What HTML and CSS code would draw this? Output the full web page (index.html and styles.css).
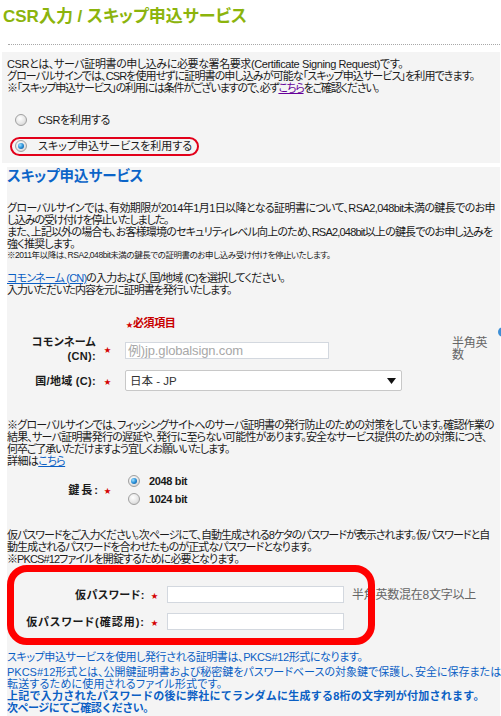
FILE: index.html
```html
<!DOCTYPE html>
<html lang="ja">
<head>
<meta charset="utf-8">
<title>CSR入力 / スキップ申込サービス</title>
<link rel="stylesheet" href="styles.css">
</head>
<body>
<h1 class="title">CSR入力 / スキップ申込サービス</h1>
<div class="rule"></div>

<div class="intro">
  <p class="text nowrap"><span class="ls-m04">CSRとは、サーバ証明書の申し込みに必要な署名要求(Certificate Signing Request)です。</span><br><span class="ls-m09">グローバルサインでは、CSRを使用せずに証明書の申し込みが可能な「スキップ申込サービス」を利用できます。</span><br><span class="ls-m12">※「スキップ申込サービス」の利用には条件がございますので、必ず<a class="visited" href="#">こちら</a>をご確認ください。</span></p>
  <div class="choice choice-first"><span class="radio"></span><span class="choice-label ls-m04">CSRを利用する</span></div>
  <div class="choice choice-second"><span class="radio checked"></span><span class="choice-label">スキップ申込サービスを利用する</span><span class="mark-ellipse"></span></div>
</div>

<div class="section">
  <h2 class="heading">スキップ申込サービス</h2>
  <p class="text nowrap para1"><span class="ls-m06">グローバルサインでは、有効期限が2014年1月1日以降となる証明書について、RSA2,048bit未満の鍵長でのお申</span><br><span class="ls-m12">し込みの受け付けを停止いたしました。</span><br><span class="ls-m08">また、上記以外の場合も、お客様環境のセキュリティレベル向上のため、RSA2,048bit以上の鍵長でのお申し込みを</span><br><span class="ls-m08">強く推奨します。</span></p>
  <p class="small nowrap">※2011年以降は、RSA2,048bit未満の鍵長での証明書のお申し込み受け付けを停止いたします。</p>
  <p class="text nowrap para-cn"><span class="ls-m08"><a class="link" href="#">コモンネーム (CN)</a>の入力および、国/地域 (C)を選択してください。</span><br><span class="ls-m10">入力いただいた内容を元に証明書を発行いたします。</span></p>

  <div class="required"><span class="star">★</span>必須項目</div>

  <div class="row row-cn">
    <div class="label">コモンネーム<br>(CN):</div>
    <div class="star-col"><span class="star">★</span></div>
    <div class="input cn-input">例)jp.globalsign.com</div>
    <div class="hint hint-cn">半角英<br>数</div>
  </div>
  <div class="row row-country">
    <div class="label">国/地域 (C):</div>
    <div class="star-col"><span class="star">★</span></div>
    <div class="select"><span>日本 - JP</span><svg class="arrow" width="9" height="6" viewBox="0 0 9 6"><path d="M0 0H9L4.5 6Z" fill="#111"/></svg></div>
  </div>

  <p class="text nowrap para-phish"><span class="ls-m08">※グローバルサインでは、フィッシングサイトへのサーバ証明書の発行防止のための対策をしています。確認作業の</span><br><span class="ls-m08">結果、サーバ証明書発行の遅延や、発行に至らない可能性があります。安全なサービス提供のための対策につき、</span><br><span class="ls-m11">何卒ご了承いただけますよう宜しくお願いいたします。</span><br><span class="ls-m06">詳細は<a class="link" href="#">こちら</a></span></p>

  <div class="row row-key">
    <div class="label label-key">鍵長:</div>
    <div class="star-col"><span class="star">★</span></div>
    <div class="key-options">
      <div class="key-opt"><span class="radio checked"></span><span class="key-text">2048 bit</span></div>
      <div class="key-opt"><span class="radio"></span><span class="key-text">1024 bit</span></div>
    </div>
  </div>

  <p class="text nowrap para-pw"><span class="ls-m10">仮パスワードをご入力ください。次ページにて、自動生成される8ケタのパスワードが表示されます。仮パスワードと自</span><br><span class="ls-m09">動生成されるパスワードを合わせたものが正式なパスワードとなります。</span><br><span class="ls-m09">※PKCS#12ファイルを開錠するために必要となります。</span></p>

  <div class="pw-block">
    <div class="row pw-row">
      <div class="label pw-label">仮パスワード:</div>
      <div class="star-col pw-star"><span class="star">★</span></div>
      <div class="input pw-input"></div>
      <div class="hint hint-pw">半角英数混在8文字以上</div>
    </div>
    <div class="row pw-row pw-row2">
      <div class="label pw-label pw-label-wide">仮パスワード(確認用):</div>
      <div class="star-col pw-star"><span class="star">★</span></div>
      <div class="input pw-input"></div>
    </div>
    <div class="mark-box"></div>
  </div>

  <p class="blue nowrap blue1"><span class="ls-m04">スキップ申込サービスを使用し発行される証明書は、PKCS#12形式になります。</span></p>
  <p class="blue nowrap blue2"><span class="ls-0">PKCS#12形式とは、公開鍵証明書および秘密鍵をパスワードベースの対象鍵で保護し、安全に保存または</span><br><span class="ls-p02">転送するために使用されるファイル形式です。</span></p>
  <p class="blue bold nowrap"><span class="ls-p025">上記で入力されたパスワードの後に弊社にてランダムに生成する8桁の文字列が付加されます。</span><br><span class="ls-m05">次ページにてご確認ください。</span></p>
  <span class="help-dot"></span>
</div>
</body>
</html>
```

FILE: styles.css
```css
html, body {
  margin: 0;
  padding: 0;
  background: #fff;
}
body {
  width: 501px;
  height: 716px;
  overflow: hidden;
  font-family: "Liberation Sans", "Noto Sans CJK JP", sans-serif;
  font-feature-settings: "palt";
  font-size: 11px;
  line-height: 12px;
  letter-spacing: -0.8px;
  color: #1a1a1a;
}
p { margin: 0; }
.nowrap { white-space: nowrap; }

/* per-line tracking, tuned to the original line lengths */
.ls-p025 { letter-spacing: 0.25px; }
.ls-p02 { letter-spacing: 0.2px; }
.ls-0 { letter-spacing: 0; }
.ls-m04 { letter-spacing: -0.4px; }
.ls-m05 { letter-spacing: -0.5px; }
.ls-m06 { letter-spacing: -0.6px; }
.ls-m08 { letter-spacing: -0.8px; }
.ls-m09 { letter-spacing: -0.9px; }
.ls-m10 { letter-spacing: -1px; }
.ls-m11 { letter-spacing: -1.1px; }
.ls-m12 { letter-spacing: -1.2px; }

.title {
  margin: 0;
  padding: 7px 0 0 3px;
  font-size: 17px;
  line-height: 20px;
  font-weight: bold;
  letter-spacing: 0;
  color: #8cb40c;
}
.rule {
  margin: 17px 1px 0 8px;
  border-top: 1px dotted #a8a8a8;
}

.intro {
  margin: 7px 1px 0 2px;
  padding: 6px 5px 9px 5px;
  background: #f4f4f4;
}
.visited { color: #660099; }
.link { color: #0b5fc4; }

.choice {
  position: relative;
  display: flex;
  align-items: center;
  height: 16px;
  padding-left: 8px;
}
.choice-first { margin-top: 18px; }
.choice-second { margin-top: 10px; }
.choice-label {
  margin-left: 11px;
  font-size: 11px;
  letter-spacing: 0;
}
.choice-label.ls-m04 { letter-spacing: -0.4px; }
.mark-ellipse {
  position: absolute;
  left: 3px;
  top: -1px;
  width: 189px;
  height: 19px;
  box-sizing: border-box;
  border: 2px solid #e2001a;
  border-radius: 10px;
}

.radio {
  display: inline-block;
  width: 12px;
  height: 12px;
  box-sizing: border-box;
  border-radius: 50%;
  border: 1px solid #a0a0a0;
  background: radial-gradient(circle at 40% 35%, #ffffff 0%, #e6e6e6 55%, #c8c8c8 100%);
  position: relative;
  flex: none;
}
.radio.checked::after {
  content: "";
  position: absolute;
  left: 2px;
  top: 2px;
  width: 6px;
  height: 6px;
  border-radius: 50%;
  background: radial-gradient(circle at 35% 35%, #9fe0ff 0%, #2a90d8 50%, #0a4a8a 100%);
}

.section {
  position: relative;
  margin: 4px 1px 0 7px;
  background: #f4f4f4;
  padding-bottom: 20px;
}
.heading {
  margin: 0;
  font-size: 14.5px;
  line-height: 18px;
  font-weight: bold;
  letter-spacing: 0;
  color: #0c64c8;
}
.para1 { margin-top: 17px; }
.small {
  font-size: 8.5px;
  line-height: 10px;
  letter-spacing: -0.45px;
}
.para-cn { margin-top: 12px; }

.required {
  margin-top: 20px;
  padding-left: 119px;
  line-height: 14px;
  font-weight: bold;
  letter-spacing: -0.4px;
  color: #c80000;
}
.star {
  color: #d40000;
  font-size: 7px;
  letter-spacing: 0;
}

.row {
  display: flex;
  align-items: center;
}
.label {
  width: 89px;
  text-align: right;
  font-weight: bold;
  line-height: 14px;
  letter-spacing: 0.3px;
  color: #1a1a1a;
}
.star-col {
  width: 29px;
  padding-left: 8px;
  box-sizing: border-box;
}
.input {
  height: 17px;
  box-sizing: border-box;
  background: #fff;
  border: 1px solid #d3d8df;
}
.row-cn { margin-top: 3px; }
.cn-input {
  width: 204px;
  margin-top: 2px;
  padding-left: 2px;
  font-size: 13px;
  line-height: 15px;
  letter-spacing: -0.15px;
  color: #a8a8a8;
}
.hint {
  color: #666;
  font-size: 12px;
  line-height: 12px;
  letter-spacing: -0.25px;
}
.hint-cn {
  margin-left: 123px;
  width: 40px;
}
.row-country { margin-top: 7px; }
.select {
  width: 277px;
  height: 21px;
  box-sizing: border-box;
  background: #fff;
  border: 1px solid #c8c8c8;
  border-radius: 2px;
  display: flex;
  align-items: center;
  justify-content: space-between;
  padding: 0 5px 0 4px;
  font-size: 11.5px;
  letter-spacing: 0;
  color: #333;
}

.para-phish { margin-top: 28px; }

.row-key { margin-top: 7px; }
.label-key { width: 93px; letter-spacing: 2px; }
.row-key .star-col { width: 25px; padding-left: 4px; }
.key-options {
  margin-left: 3px;
  display: flex;
  flex-direction: column;
  gap: 4px;
}
.key-opt {
  display: flex;
  align-items: center;
  height: 14px;
}
.key-text {
  margin-left: 9px;
  font-weight: bold;
  font-size: 11px;
  letter-spacing: -0.35px;
}

.para-pw { margin-top: 23px; }

.pw-block {
  position: relative;
  height: 80px;
  box-sizing: border-box;
  padding-top: 21px;
}
.pw-label { width: 138px; letter-spacing: 0.5px; }
.pw-label-wide { letter-spacing: 1px; }
.pw-star { width: 22px; padding-left: 6px; }
.pw-input { width: 177px; }
.pw-row2 { margin-top: 10px; }
.hint-pw { margin-left: 8px; }
.mark-box {
  position: absolute;
  left: 0;
  top: 0;
  width: 368px;
  height: 80px;
  box-sizing: border-box;
  border: 7px solid #ff0000;
  border-radius: 20px;
}

.blue {
  color: #0b5fc4;
}
.blue1 { margin-top: 6px; }
.blue2 { margin-top: 3px; }
.bold {
  font-weight: bold;
  font-feature-settings: normal;
}

.help-dot {
  position: absolute;
  left: 491px;
  top: 160px;
  width: 10px;
  height: 10px;
  border-radius: 50%;
  background: #3d8fd6;
}
```
